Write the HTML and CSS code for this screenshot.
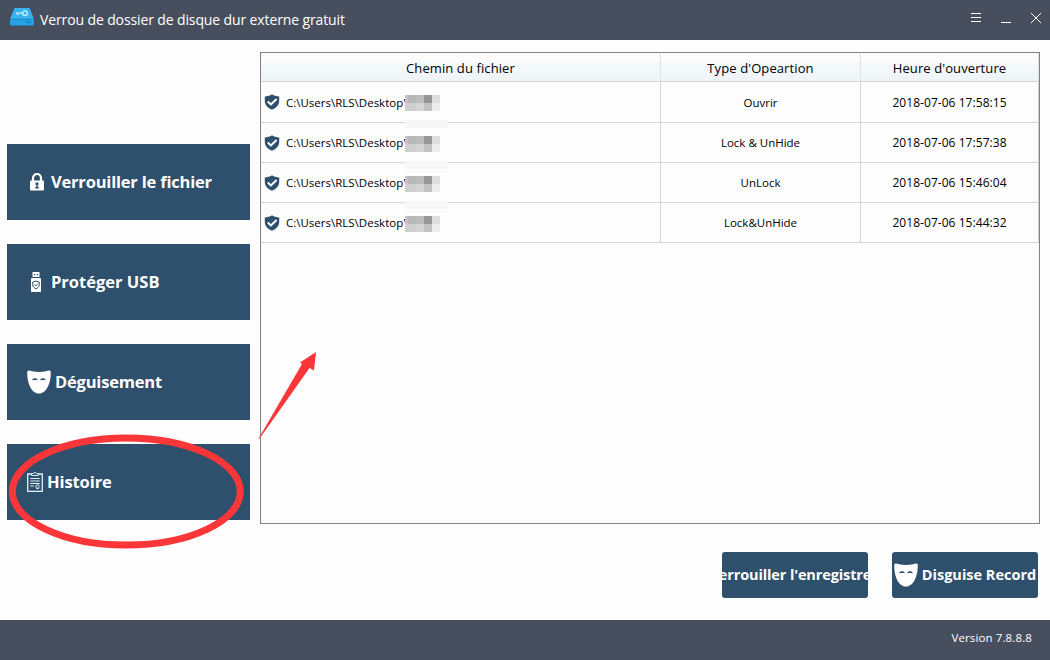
FILE: index.html
```html
<!DOCTYPE html>
<html lang="fr">
<head>
    <meta charset="UTF-8">
    <meta name="viewport" content="width=device-width, initial-scale=1.0">
    <title>Verrou de dossier de disque dur externe gratuit</title>
    <link rel="stylesheet" href="styles.css">
</head>
<body>
    <svg width="0" height="0" class="defs">
        <symbol id="mask" viewBox="0 0 24 24">
            <path fill="#fff" d="M0.3 1.6C1 0 3 .7 5 1.2c4.600 1 9.400 1 14 0 2-.5 4-1.200 4.700.4C24.200 10 21 23.600 12 23.600S-.2 10 .3 1.600z"/>
            <path fill="#2f506c" d="M5 10.300c1.200-2.600 4.600-2.600 6 0-1.900-.5-4-.5-6 0zM13 10.300c1.200-2.600 4.600-2.600 6 0-1.900-.5-4-.5-6 0z"/>
        </symbol>
        <symbol id="shield" viewBox="0 0 16 16">
            <path fill="#2f4f6c" d="M8 .3C6 1.700 3.500 2.300.8 2.500v4.200c0 4.300 3 7.300 7.200 9 4.200-1.700 7.200-4.700 7.200-9V2.500C12.500 2.300 10 1.700 8 .3z"/>
            <path fill="none" stroke="#fff" stroke-width="2" d="M3.700 7.600l3.200 2.900 5.700-5.400"/>
        </symbol>
    </svg>

    <header class="titlebar">
        <svg class="logo" width="24" height="18" viewBox="0 0 24 18">
            <path fill="#36b3f0" d="M4.500 0h15L24 11H0z"/>
            <rect fill="#22a4ea" y="11" width="24" height="6.500" rx="1.500"/>
            <path stroke="#2178ab" stroke-width=".7" d="M0 11.200h24"/>
            <circle cx="15" cy="5.200" r="2.300" fill="none" stroke="#c8f1ff" stroke-width="1.300"/>
            <path fill="none" stroke="#c8f1ff" stroke-width="1.300" d="M13 5.200H6M7.600 5.200v2"/>
            <path fill="#16638f" d="M16.500 13.500h1.500V15h-1.500zM19.500 13.500H21V15h-1.500z"/>
        </svg>
        <h1>Verrou de dossier de disque dur externe gratuit</h1>
        <div class="window-controls">
            <svg width="12" height="12" viewBox="0 0 12 12"><path d="M1 1.500h10M1 5.500h10M1 9.500h10"/></svg>
            <svg width="12" height="12" viewBox="0 0 12 12"><path d="M1 10.500h10"/></svg>
            <svg width="12" height="12" viewBox="0 0 12 12"><path d="M1 1l10 10M11 1L1 11"/></svg>
        </div>
    </header>

    <main class="content">
        <nav class="sidebar">
            <button class="nav-btn lock">
                <svg width="14" height="18" viewBox="0 0 14 18">
                    <path fill="none" stroke="#fff" stroke-width="2.200" d="M3 9V5a4 4 0 0 1 8 0v4"/>
                    <rect fill="#fff" y="7.500" width="14" height="10" rx="1"/>
                    <path fill="#2f506c" d="M5.500 9.500h3v2.200h-.7v2.300h1v1.500H5.300V14h1v-2.300h-.8z"/>
                </svg>
                <span>Verrouiller le fichier</span>
            </button>
            <button class="nav-btn usb">
                <svg width="10" height="20" viewBox="0 0 10 20">
                    <path fill="#fff" fill-rule="evenodd" d="M1.500 0h7v5h-7zM3 2v1.300h1.300V2zM5.700 2v1.300H7V2z"/>
                    <rect fill="#fff" y="6" width="10" height="14" rx=".7"/>
                    <path fill="none" stroke="#2f506c" stroke-width="1" d="M5 9L1.700 10.100v2.600c0 2 1.500 3.200 3.300 4 1.800-.8 3.300-2 3.300-4v-2.600zM3.300 12.700l1.400 1.200 2.200-2.300"/>
                </svg>
                <span>Protéger USB</span>
            </button>
            <button class="nav-btn disguise">
                <svg width="24" height="24"><use href="#mask"/></svg>
                <span>Déguisement</span>
            </button>
            <button class="nav-btn history">
                <svg width="16" height="20" viewBox="0 0 16 20" fill="none" stroke="#dff3f5">
                    <path stroke-width="1.300" d="M4.500 2H.7v17.300h14.600V2h-3.800"/>
                    <path stroke-width="1" d="M4.500 3.500v-2h2c.3-1.300 2.700-1.300 3 0h2v2zM3.300 6.500h9.400M3.300 9h9.400M3.300 11.500h9.400M3.300 14h3.500"/>
                    <circle cx="10.500" cy="14.500" r="1.700"/>
                    <path stroke-width=".8" d="M9 16.500h3"/>
                </svg>
                <span>Histoire</span>
            </button>
        </nav>

        <section class="panel">
            <div class="records">
                <table>
                    <thead>
                        <tr>
                            <th class="col-path">Chemin du fichier</th>
                            <th class="col-type">Type d'Opeartion</th>
                            <th class="col-time">Heure d'ouverture</th>
                        </tr>
                    </thead>
                    <tbody>
                        <tr>
                            <td><div class="path"><svg width="16" height="16"><use href="#shield"/></svg><span>C:\Users\RLS\Desktop'</span><i class="mosaic"></i></div></td>
                            <td class="type">Ouvrir</td>
                            <td class="time">2018-07-06 17:58:15</td>
                        </tr>
                        <tr>
                            <td><div class="path"><svg width="16" height="16"><use href="#shield"/></svg><span>C:\Users\RLS\Desktop'</span><i class="mosaic"></i></div></td>
                            <td class="type">Lock &amp; UnHide</td>
                            <td class="time">2018-07-06 17:57:38</td>
                        </tr>
                        <tr>
                            <td><div class="path"><svg width="16" height="16"><use href="#shield"/></svg><span>C:\Users\RLS\Desktop'</span><i class="mosaic"></i></div></td>
                            <td class="type">UnLock</td>
                            <td class="time">2018-07-06 15:46:04</td>
                        </tr>
                        <tr>
                            <td><div class="path"><svg width="16" height="16"><use href="#shield"/></svg><span>C:\Users\RLS\Desktop'</span><i class="mosaic"></i></div></td>
                            <td class="type">Lock&amp;UnHide</td>
                            <td class="time">2018-07-06 15:44:32</td>
                        </tr>
                    </tbody>
                </table>
            </div>
            <div class="actions">
                <button class="action-btn lock-record"><span>errouiller l'enregistre</span></button>
                <button class="action-btn disguise-record">
                    <svg width="24" height="24"><use href="#mask"/></svg>
                    <span>Disguise Record</span>
                </button>
            </div>
        </section>
    </main>

    <footer class="footer">Version 7.8.8.8</footer>

    <!-- red marks over the page -->
    <svg class="marks" width="1050" height="660" viewBox="0 0 1050 660">
        <ellipse cx="126.300" cy="491.500" rx="114" ry="53.500" fill="none" stroke="#fb3639" stroke-width="7"/>
        <path fill="#fb3639" d="M258.300 439L302 364l-2-1.500 16-10.500-2 18.500-4.500-2.500L260 438z"/>
    </svg>
</body>
</html>
```
FILE: styles.css
```css
* {
    margin: 0;
    padding: 0;
    box-sizing: border-box;
    font-family: 'Open Sans', 'Noto Sans', sans-serif;
}

body {
    width: 1050px;
    height: 660px;
    display: flex;
    flex-direction: column;
    background: #fdfdfd;
    color: #000;
    overflow: hidden;
}

svg {
    display: block;
    flex-shrink: 0;
}

.defs {
    position: absolute;
}

/* Title bar */
.titlebar {
    height: 40px;
    display: flex;
    align-items: center;
    padding: 0 8px 0 10px;
    background: #474f5e;
    color: #fff;
}

.logo {
    margin: -6px 6px 0 0;
}

h1 {
    font-size: 14px;
    font-weight: 400;
    letter-spacing: -0.12px;
    padding-bottom: 2px;
}

.window-controls {
    display: flex;
    gap: 18px;
    margin: -4px 0 0 auto;
    stroke: #fff;
}

.content {
    height: 580px;
    display: flex;
    padding: 12px 10px 0 7px;
    gap: 10px;
}

/* Left menu */
.sidebar {
    width: 243px;
    display: flex;
    flex-direction: column;
    gap: 24px;
    padding-top: 92px;
}

.nav-btn {
    height: 76px;
    display: flex;
    align-items: center;
    border: none;
    background: #2f506c;
    color: #fff;
    font-size: 16.5px;
    font-weight: 700;
    text-align: left;
}

.nav-btn span,
.action-btn span {
    white-space: nowrap;
    padding-bottom: 2px;
}

.lock {
    padding-left: 23px;
    gap: 7px;
    letter-spacing: -0.2px;
}

.usb {
    padding-left: 24px;
    gap: 10px;
}

.disguise {
    padding-left: 20px;
    gap: 4px;
    letter-spacing: -0.2px;
}

.history {
    padding-left: 20px;
    gap: 4px;
    letter-spacing: -0.1px;
}

/* Records */
.panel {
    width: 780px;
}

.records {
    height: 472px;
    border: 1px solid #7f8385;
}

table {
    width: 778px;
    border-collapse: separate;
    border-spacing: 0;
    table-layout: fixed;
}

th {
    height: 29px;
    border-right: 1px solid #dfe3e5;
    border-bottom: 1px solid #d2d4d5;
    background: linear-gradient(#fdfdfd 30%, #f6fafc 35%, #eef3f6);
    font-size: 13px;
    font-weight: 400;
    letter-spacing: 0.1px;
    padding-top: 1px;
}

td {
    height: 40px;
    border-right: 1px solid #d2d4d5;
    border-bottom: 1px solid #d2d4d5;
    font-size: 11.5px;
    text-align: center;
}

tbody tr:first-child td {
    height: 41px;
}

.col-path {
    width: 400px;
}

.col-type {
    width: 200px;
}

.time {
    font-size: 12px;
    letter-spacing: 0.05px;
}

.path {
    display: flex;
    align-items: center;
    padding-left: 3px;
}

.path span {
    width: 119px;
    margin-left: 6px;
    text-align: left;
    white-space: nowrap;
}

/* hidden part of the file name */
.mosaic {
    position: relative;
    width: 35px;
    height: 16px;
    margin-top: 2px;
    background:
        linear-gradient(90deg, #c3c3c3 3px, #b8b8b8 3px 11px, #bcbcbc 11px 19px, #969696 19px 27px, #dedede 27px) top / 100% 8px no-repeat,
        linear-gradient(90deg, #cfcfcf 3px, #cecece 3px 11px, #d4d4d4 11px 19px, #c2c2c2 19px 27px, #ececec 27px) bottom / 100% 8px no-repeat;
}

/* pale patch over the line between two rows */
tr:not(:last-child) .mosaic::after {
    content: '';
    position: absolute;
    top: 25px;
    left: 0;
    width: 43px;
    height: 8px;
    background: #f7f7f7;
}

/* Bottom buttons */
.actions {
    display: flex;
    justify-content: flex-end;
    gap: 24px;
    padding: 28px 2px 0 0;
}

.action-btn {
    width: 146px;
    height: 46px;
    display: flex;
    align-items: center;
    justify-content: center;
    gap: 4px;
    border: none;
    border-radius: 3px;
    background: #2f506c;
    color: #fff;
    font-size: 14.5px;
    font-weight: 700;
    white-space: nowrap;
    overflow: hidden;
}

.lock-record {
    letter-spacing: -0.12px;
}

.footer {
    height: 40px;
    padding: 10px 18px 0 0;
    background: #474f5e;
    color: #fff;
    font-size: 11.5px;
    letter-spacing: 0.12px;
    text-align: right;
}

.marks {
    position: absolute;
    top: 0;
    left: 0;
    pointer-events: none;
}
```
